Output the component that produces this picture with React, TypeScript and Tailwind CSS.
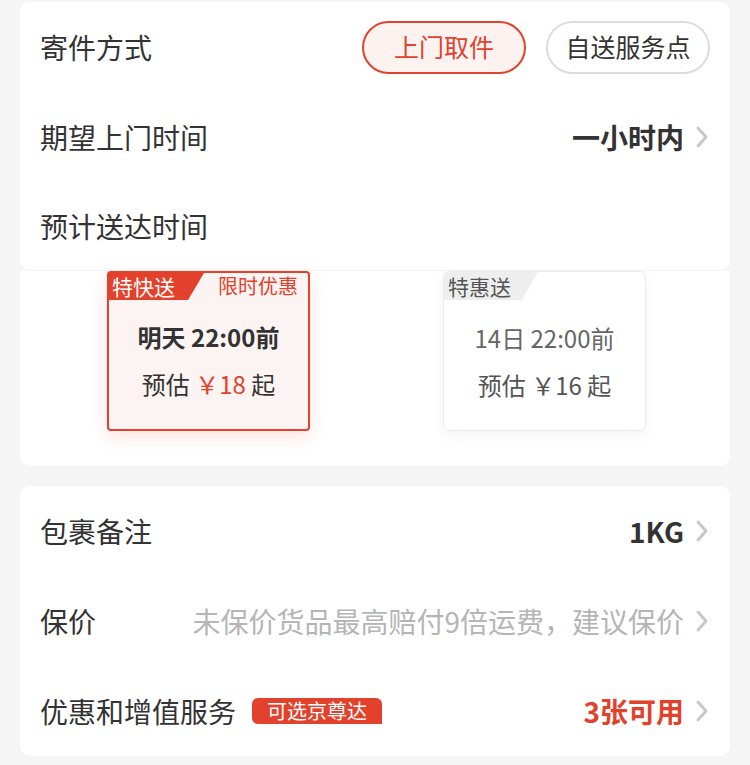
const font = { fontFamily: '"Noto Sans CJK SC", "Noto Sans", sans-serif' };

function Arrow() {
  return (
    <svg width="16" height="24" viewBox="0 0 16 24" className="ml-[10px]">
      <polyline points="4,3 12,12 4,21" fill="none" stroke="#c8c8c8" strokeWidth="3" strokeLinecap="round" strokeLinejoin="round" />
    </svg>
  );
}

function Row({ label, children }: { label: React.ReactNode; children?: React.ReactNode }) {
  return (
    <div className="h-[90px] flex items-center justify-between pl-[20px] pr-[20px]">
      <div className="text-[28px] text-[#333] flex items-center">{label}</div>
      <div className="flex items-center">{children}</div>
    </div>
  );
}

export default function App() {
  return (
    <div className="min-h-screen bg-[#f5f5f5] px-[20px] pt-[2px] pb-[10px]" style={font}>
      <div className="bg-white rounded-[10px]">
        <Row label="寄件方式">
          <button className="w-[164px] h-[53px] rounded-full border-2 border-[#e2412c] bg-[#fcf3f1] text-[#e2412c] text-[25px]">
            上门取件
          </button>
          <button className="ml-[20px] w-[164px] h-[53px] rounded-full border-2 border-[#dddddd] bg-white text-[#333] text-[25px]">
            自送服务点
          </button>
        </Row>
        <Row label="期望上门时间">
          <span className="text-[28px] font-bold text-[#333]">一小时内</span>
          <Arrow />
        </Row>
        <div className="h-[88px] flex items-center pl-[20px] text-[28px] text-[#333]">预计送达时间</div>
      </div>
      <div className="bg-white rounded-b-[10px] mt-px h-[195px] flex pl-[87px] gap-[133px]">
        <div className="w-[203px] h-[160px] rounded-[4px] border-2 border-[#e2412c] bg-[#fcf4f2] shadow-[0_6px_18px_rgba(226,65,44,0.14)] flex flex-col">
          <div className="flex justify-between items-start h-[28px]">
            <div className="w-[95px] h-[27px] bg-[#e2412c] text-white text-[21px] leading-[26px] pl-[3px] [clip-path:polygon(0_0,100%_0,calc(100%-16px)_100%,0_100%)]">
              特快送
            </div>
            <div className="text-[#e2412c] text-[20px] leading-[26px] pr-[10px]">限时优惠</div>
          </div>
          <div className="text-center text-[24px] font-bold text-[#333] mt-[20px] leading-[32px]">明天 22:00前</div>
          <div className="text-center text-[24px] text-[#333] mt-[15px] leading-[32px]">
            预估 <span className="text-[#e2412c]">￥18</span> 起
          </div>
        </div>
        <div className="w-[203px] h-[160px] rounded-[6px] border border-[#ececec] bg-white shadow-[0_4px_14px_rgba(0,0,0,0.05)] flex flex-col overflow-hidden">
          <div className="h-[28px]">
            <div className="w-[94px] h-[28px] bg-[#eeeeee] text-[#555] text-[21px] leading-[28px] pl-[4px] [clip-path:polygon(0_0,100%_0,calc(100%-16px)_100%,0_100%)]">
              特惠送
            </div>
          </div>
          <div className="text-center text-[24px] text-[#666] mt-[22px] leading-[32px]">14日 22:00前</div>
          <div className="text-center text-[24px] text-[#555] mt-[15px] leading-[32px]">预估 ￥16 起</div>
        </div>
      </div>
      <div className="bg-white rounded-[10px] mt-[20px]">
        <Row label="包裹备注">
          <span className="text-[28px] font-bold text-[#333]">1KG</span>
          <Arrow />
        </Row>
        <Row label="保价">
          <span className="text-[28px] text-[#b5b5b5]">未保价货品最高赔付9倍运费，建议保价</span>
          <Arrow />
        </Row>
        <Row
          label={
            <>
              优惠和增值服务
              <span className="ml-[16px] h-[26px] px-[15px] bg-[#e2412c] text-white text-[20px] leading-[26px] rounded-[6px] rounded-br-none">
                可选京尊达
              </span>
            </>
          }
        >
          <span className="text-[28px] font-bold text-[#e2412c]">3张可用</span>
          <Arrow />
        </Row>
      </div>
    </div>
  );
}
